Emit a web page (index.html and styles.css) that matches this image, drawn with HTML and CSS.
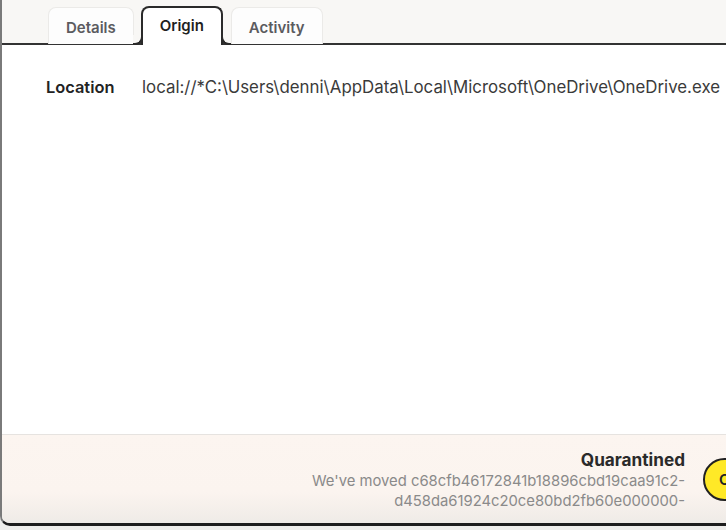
FILE: index.html
```html
<!DOCTYPE html>
<html>
<head>
<meta charset="utf-8">
<link rel="stylesheet" href="styles.css">
</head>
<body>
<div class="window">
  <div class="tabbar">
    <div class="tab">Details</div>
    <div class="tab active">Origin</div>
    <div class="tab">Activity</div>
  </div>
  <div class="content">
    <div class="row">
      <div class="label">Location</div>
      <div class="value">local://*C:\Users\denni\AppData\Local\Microsoft\OneDrive\OneDrive.exe</div>
    </div>
  </div>
  <div class="footer">
    <div class="status">
      <div class="status-title">Quarantined</div>
      <div class="status-text">We've moved c68cfb46172841b18896cbd19caa91c2-<br>d458da61924c20ce80bd2fb60e000000-</div>
    </div>
    <div class="round-btn">C</div>
  </div>
</div>
</body>
</html>
```
FILE: styles.css
```css
html, body {
  margin: 0;
  padding: 0;
  width: 726px;
  height: 530px;
  overflow: hidden;
  background: #efeeec;
  font-family: Inter, "Noto Sans", sans-serif;
}
.window {
  width: 726px;
  height: 526px;
  box-sizing: border-box;
  background: #ffffff;
  border-left: 2px solid #7a7a7a;
  border-bottom: 3px solid #1e1e1e;
  border-bottom-left-radius: 10px;
  display: flex;
  flex-direction: column;
  overflow: hidden;
}
.tabbar {
  height: 45px;
  box-sizing: border-box;
  background: #f8f7f5;
  border-bottom: 2px solid #333;
  display: flex;
  align-items: flex-end;
  padding-left: 46px;
  gap: 8px;
  flex: none;
}
.tab {
  height: 37px;
  box-sizing: border-box;
  padding: 2px 17px 0;
  margin-bottom: -1px;
  background: #fdfdfd;
  border: 1px solid #ebeae8;
  border-bottom: none;
  border-radius: 8px 8px 0 0;
  font-size: 15px;
  font-weight: 600;
  color: #5b5b5f;
  display: flex;
  align-items: center;
  justify-content: center;
}
.tab.active {
  position: relative;
  height: 39px;
  margin-bottom: -2px;
  margin-left: -1px;
  background: #ffffff;
  border: 2px solid #2a2a2a;
  border-bottom: none;
  color: #1f1f1f;
  padding: 0 17px 3px;
}
.tab.active::before,
.tab.active::after {
  content: "";
  position: absolute;
  bottom: 0;
  width: 8px;
  height: 8px;
  border-bottom: 2px solid #2a2a2a;
  background: #f8f7f5;
}
.tab.active::before {
  left: -10px;
  border-right: 2px solid #2a2a2a;
  border-bottom-right-radius: 8px;
}
.tab.active::after {
  right: -10px;
  border-left: 2px solid #2a2a2a;
  border-bottom-left-radius: 8px;
}
.content {
  flex: 1;
  padding: 32px 0 0 44px;
}
.row {
  display: flex;
  align-items: baseline;
}
.label {
  width: 96px;
  font-size: 16.4px;
  font-weight: 600;
  color: #222;
}
.value {
  font-size: 16.85px;
  color: #3a3a3a;
  white-space: nowrap;
}
.footer {
  flex: none;
  height: 89px;
  box-sizing: border-box;
  border-top: 1px solid #e6e3e0;
  background: linear-gradient(#fcf5f0 0%, #fbf4ef 65%, #efebe7 100%);
  display: flex;
  align-items: flex-start;
  padding: 14px 0 0 0;
}
.status {
  width: 683px;
  text-align: right;
  flex: none;
}
.status-title {
  font-size: 17.2px;
  font-weight: 700;
  color: #2a2a2a;
  line-height: 22px;
}
.status-text {
  font-size: 14.8px;
  color: #8a8a8a;
  line-height: 20px;
}
.round-btn {
  margin-left: 18px;
  margin-top: 9px;
  width: 43px;
  height: 43px;
  box-sizing: border-box;
  border-radius: 50%;
  background: #ffe927;
  border: 2px solid #222;
  font-size: 15px;
  font-weight: 600;
  color: #222;
  display: flex;
  align-items: center;
  justify-content: center;
  flex: none;
}
```
